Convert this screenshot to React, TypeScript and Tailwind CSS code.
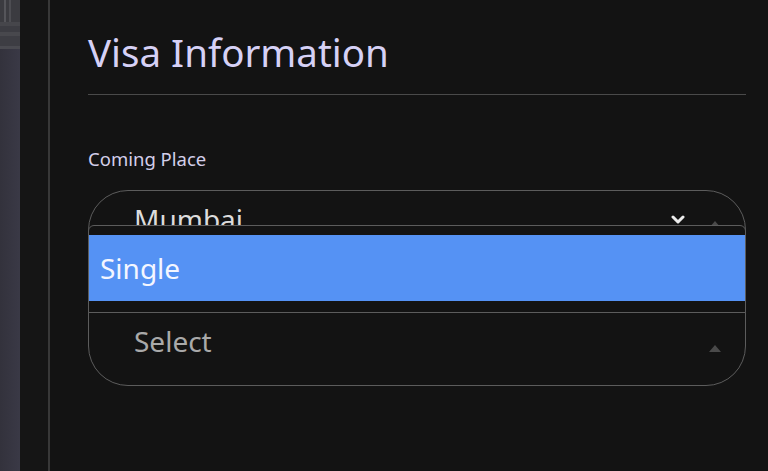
const ChevronDown = () => (
    <svg width="14" height="9" viewBox="0 0 14 9" className="block">
        <path d="M2 2 L7 7 L12 2" fill="none" stroke="#ececec" strokeWidth="3" strokeLinecap="round" strokeLinejoin="round" />
    </svg>
)

const TriangleUp = () => (
    <svg width="14" height="9" viewBox="0 0 14 9" className="block">
        <path d="M7 1 L13 8 L1 8 Z" fill="#4a4a4a" />
    </svg>
)

const App = () => {
    return (
        <div
            className="flex h-[471px] w-[768px] overflow-hidden bg-[#131313]"
            style={{ fontFamily: '"Noto Sans", "Open Sans", sans-serif' }}
        >
            {/* blurred side strip */}
            <div className="flex w-5 flex-col bg-gradient-to-r from-[#33323c] to-[#3a3946]">
                <div className="flex h-[22px] gap-[3px] bg-[#3b3b40] px-[4px]">
                    <div className="w-[2px] bg-[#55555a]" />
                    <div className="w-[2px] bg-[#4d4d52]" />
                </div>
                <div className="h-[4px] bg-[#46464b]" />
                <div className="h-[6px] bg-[#3c3c42]" />
                <div className="h-[4px] bg-[#48484d]" />
                <div className="h-[10px] bg-[#3d3d43]" />
                <div className="h-[3px] bg-[#4a4a50]" />
            </div>
            <div className="w-[28px] bg-[#151515]" />
            <div className="w-[2px] bg-[#383838]" />

            <main className="flex-1 pl-[38px] pr-[22px] pt-[30px]">
                <h1 className="text-[38.5px] leading-[44px] text-[#d6d1f6]">Visa Information</h1>
                <div className="mt-[20px] h-px bg-[#4a4a4a]" />

                <label className="mt-[52px] block text-[18.5px] leading-[24px] text-[#d3cfea]">Coming Place</label>

                <div className="relative mt-[19px] h-[196px] rounded-[40px] border border-[#5c5c5c]">
                    <div className="flex h-[45px] items-start pl-[45px] pr-[23px]">
                        <span className="mt-[11px] text-[28px] leading-[34px] text-[#dcdcdc]">Mumbai</span>
                        <div className="ml-auto mt-[24px]">
                            <ChevronDown />
                        </div>
                        <div className="ml-[23px] mt-[29px]">
                            <TriangleUp />
                        </div>
                    </div>

                    <div className="absolute left-[-1px] right-[-1px] top-[34px] z-10 rounded-t-[6px] border border-[#5c5c5c] bg-[#131313]">
                        <div className="h-[9px]" />
                        <div className="flex h-[66px] items-center bg-[#5592f4] px-[11px] text-[28px] text-[#f4f6ff]">
                            Single
                        </div>
                        <div className="h-[11px]" />
                    </div>

                    <div className="mt-[88px] flex items-start pl-[45px] pr-[23px]">
                        <span className="text-[28px] leading-[34px] text-[#a9a9a9]">Select</span>
                        <div className="ml-auto mt-[20px]">
                            <TriangleUp />
                        </div>
                    </div>
                </div>
            </main>
        </div>
    )
}

export default App
